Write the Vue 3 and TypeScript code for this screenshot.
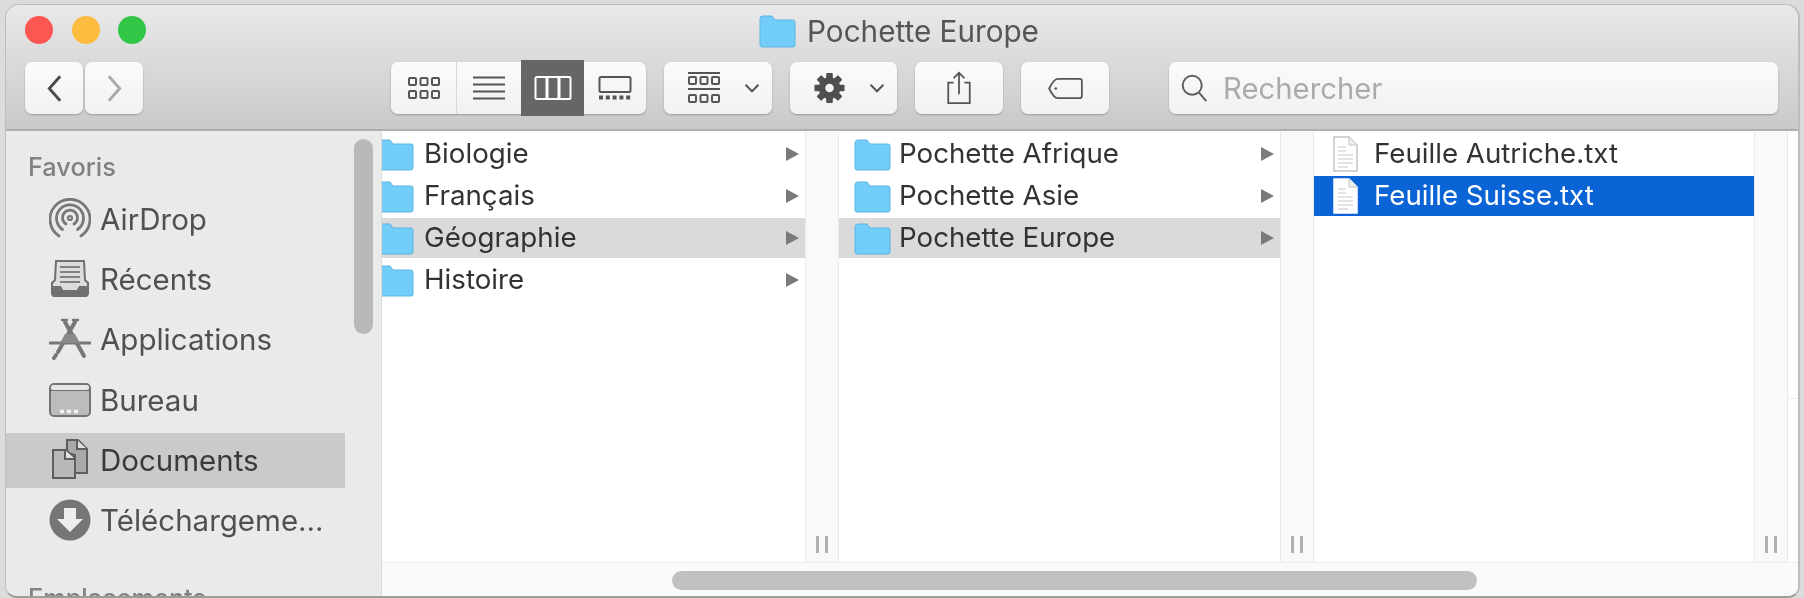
<script setup lang="ts">
interface Row {
  name: string
  icon: 'folder' | 'file'
  state?: 'open' | 'selected'
  arrow?: boolean
}

interface Column {
  width: number
  resizer: number
  rows: Row[]
}

const places = [
  { name: 'AirDrop', icon: 'airdrop' },
  { name: 'Récents', icon: 'recents' },
  { name: 'Applications', icon: 'apps' },
  { name: 'Bureau', icon: 'desktop' },
  { name: 'Documents', icon: 'docs', active: true },
  { name: 'Téléchargeme...', icon: 'download' },
]

const columns: Column[] = [
  {
    width: 423,
    resizer: 34,
    rows: [
      { name: 'Biologie', icon: 'folder', arrow: true },
      { name: 'Français', icon: 'folder', arrow: true },
      { name: 'Géographie', icon: 'folder', arrow: true, state: 'open' },
      { name: 'Histoire', icon: 'folder', arrow: true },
    ],
  },
  {
    width: 441,
    resizer: 34,
    rows: [
      { name: 'Pochette Afrique', icon: 'folder', arrow: true },
      { name: 'Pochette Asie', icon: 'folder', arrow: true },
      { name: 'Pochette Europe', icon: 'folder', arrow: true, state: 'open' },
    ],
  },
  {
    width: 440,
    resizer: 34,
    rows: [
      { name: 'Feuille Autriche.txt', icon: 'file' },
      { name: 'Feuille Suisse.txt', icon: 'file', state: 'selected' },
    ],
  },
]
</script>

<template>
  <div class="window">
    <header class="titlebar">
      <div class="title-row">
        <div class="lights">
          <span class="light red"></span>
          <span class="light yellow"></span>
          <span class="light green"></span>
        </div>
        <div class="title">
          <svg class="title-folder" viewBox="0 0 37 34">
            <path d="M1 5a3 3 0 0 1 3-3h9l3 4h18a2 2 0 0 1 2 2v23a2 2 0 0 1-2 2H3a2 2 0 0 1-2-2z" fill="#72cdf8" stroke="#5db4e2" />
          </svg>
          <span>Pochette Europe</span>
        </div>
      </div>

      <div class="toolbar">
        <div class="nav">
          <button class="btn nav-btn">
            <svg viewBox="0 0 18 30" width="17" height="29"><path d="M15 2 3.500 15 15 28" fill="none" stroke="#4a4a4a" stroke-width="3" /></svg>
          </button>
          <button class="btn nav-btn">
            <svg viewBox="0 0 18 30" width="17" height="29"><path d="M3 2l11.500 13L3 28" fill="none" stroke="#a9a9a9" stroke-width="3" /></svg>
          </button>
        </div>

        <div class="views">
          <button class="view view-grid">
            <svg viewBox="0 0 34 24" width="34" height="24" fill="none" stroke="#555" stroke-width="2">
              <rect x="2" y="2" width="7" height="7" rx="1" /><rect x="13.500" y="2" width="7" height="7" rx="1" /><rect x="25" y="2" width="7" height="7" rx="1" />
              <rect x="2" y="15" width="7" height="7" rx="1" /><rect x="13.500" y="15" width="7" height="7" rx="1" /><rect x="25" y="15" width="7" height="7" rx="1" />
            </svg>
          </button>
          <button class="view view-list">
            <svg viewBox="0 0 34 24" width="34" height="24" fill="none" stroke="#555" stroke-width="2">
              <path d="M1 1.500h32M1 8.500h32M1 15.500h32M1 22.500h32" />
            </svg>
          </button>
          <button class="view view-on">
            <svg viewBox="0 0 38 24" width="38" height="24" fill="none" stroke="#fff" stroke-width="2">
              <rect x="1.500" y="1" width="35" height="22" rx="1.500" /><path d="M13 1v22M25 1v22" stroke-width="3" />
            </svg>
          </button>
          <button class="view view-gallery">
            <svg viewBox="0 0 34 24" width="34" height="24" fill="none" stroke="#555" stroke-width="2">
              <rect x="1.500" y="1" width="31" height="15" rx="1.500" />
              <path d="M1 21.500h32" stroke-width="4" stroke-dasharray="4 2.800" />
            </svg>
          </button>
        </div>

        <button class="btn group-btn">
          <svg viewBox="0 0 34 32" width="34" height="32" fill="none" stroke="#555" stroke-width="2">
            <path d="M1 1h32M1 17h32" />
            <rect x="2" y="5" width="7" height="7" rx="1" /><rect x="13.500" y="5" width="7" height="7" rx="1" /><rect x="25" y="5" width="7" height="7" rx="1" />
            <rect x="2" y="23" width="7" height="7" rx="1" /><rect x="13.500" y="23" width="7" height="7" rx="1" /><rect x="25" y="23" width="7" height="7" rx="1" />
          </svg>
          <svg class="chev" viewBox="0 0 18 12" width="18" height="11"><path d="M2 2l7 7 7-7" fill="none" stroke="#555" stroke-width="2.200" /></svg>
        </button>

        <button class="btn action-btn">
          <svg viewBox="0 0 34 34" width="33" height="32">
            <g fill="#4f4f4f">
              <rect x="13.500" y="1" width="7" height="32" rx="1" />
              <rect x="13.500" y="1" width="7" height="32" rx="1" transform="rotate(45 17 17)" />
              <rect x="13.500" y="1" width="7" height="32" rx="1" transform="rotate(90 17 17)" />
              <rect x="13.500" y="1" width="7" height="32" rx="1" transform="rotate(135 17 17)" />
            </g>
            <circle cx="17" cy="17" r="9" fill="none" stroke="#4f4f4f" stroke-width="5" />
            <circle cx="17" cy="17" r="4.500" fill="#f3f3f3" />
          </svg>
          <svg class="chev" viewBox="0 0 18 12" width="18" height="11"><path d="M2 2l7 7 7-7" fill="none" stroke="#555" stroke-width="2.200" /></svg>
        </button>

        <button class="btn share-btn">
          <svg viewBox="0 0 28 38" width="26" height="34" fill="none" stroke="#555" stroke-width="2">
            <path d="M8 13H2v23h24V13h-6M14 26V2M8 8l6-6 6 6" />
          </svg>
        </button>

        <button class="btn tag-btn">
          <svg viewBox="0 0 40 26" width="39" height="23" fill="none" stroke="#555" stroke-width="2">
            <path d="M11 2h25a2.500 2.500 0 0 1 2.500 2.500v17A2.500 2.500 0 0 1 36 24H11C7 24 4 18 1.500 13 4 8 7 2 11 2z" stroke-linejoin="round" />
            <circle cx="9" cy="13" r="1.500" fill="#555" stroke="none" />
          </svg>
        </button>

        <div class="search">
          <svg viewBox="0 0 30 32" width="29" height="29" fill="none" stroke="#606060" stroke-width="2.200">
            <circle cx="12.500" cy="12.500" r="10.500" /><path d="M20 20.500l8 9.500" />
          </svg>
          <span>Rechercher</span>
        </div>
      </div>
    </header>

    <div class="body">
      <aside class="sidebar">
        <h2 class="section first">Favoris</h2>
        <ul class="places">
          <li v-for="p in places" :key="p.name" class="place" :class="{ active: p.active }">
            <svg class="place-icon" viewBox="0 0 42 42">
              <g v-if="p.icon === 'airdrop'" fill="none" stroke="#787878" stroke-width="2.800" stroke-linecap="round">
                <path d="M10 38A20 20 0 1 1 32 38" />
                <path d="M13.500 31.500A13.500 13.500 0 1 1 28.500 31.500" />
                <path d="M17 26A7.500 7.500 0 1 1 25 26" />
                <circle cx="21" cy="20" r="2" stroke-width="2.200" />
              </g>
              <g v-else-if="p.icon === 'recents'">
                <path d="M7 3h28l1 19 3 3v10a3 3 0 0 1-3 3H6a3 3 0 0 1-3-3V25l3-3z" fill="#dcdcdc" stroke="#707070" stroke-width="2" />
                <path d="M11 9h20M11 14h20M11 19h20M11 24h20" stroke="#808080" stroke-width="2" />
                <path d="M3 28h9l2 4h14l2-4h9v8a3 3 0 0 1-3 3H6a3 3 0 0 1-3-3z" fill="#707070" />
              </g>
              <g v-else-if="p.icon === 'apps'" fill="none" stroke="#777" stroke-width="4" stroke-linecap="round">
                <path d="M1 25h40" stroke-width="3" />
                <path d="M16 4l19 34M26 4L9 34" />
                <path d="M13 2h5M24 2h5" stroke-width="2.500" />
                <path d="M16 16l-5 9h20l-5-9z" fill="#8a8a8a" stroke="none" />
                <path d="M5 40l2-3" stroke-width="4" />
              </g>
              <g v-else-if="p.icon === 'desktop'">
                <rect x="1" y="5" width="40" height="32" rx="4" fill="#bcbcbc" stroke="#747474" stroke-width="2" />
                <path d="M1 11h40" stroke="#747474" stroke-width="2" />
                <rect x="2" y="6" width="38" height="5" rx="2.500" fill="#e6e6e6" />
                <path d="M11 32.500h20" stroke="#f4f4f4" stroke-width="3.500" stroke-dasharray="4 3" />
              </g>
              <g v-else-if="p.icon === 'docs'" stroke="#5e5e5e" stroke-width="2">
                <path d="M18 1h11l9 9v24H26V16l-8-2z" fill="#a9a9a9" />
                <path d="M28 1v9h10" fill="#dedede" />
                <path d="M4 11h13l9 8v20H4z" fill="#b8b8b8" />
                <path d="M16 11v9h10" fill="#e2e2e2" />
              </g>
              <g v-else>
                <circle cx="21" cy="21" r="20.500" fill="#767676" />
                <path d="M15 9h12v11h7L21 33 8 20h7z" fill="#eee" />
              </g>
            </svg>
            <span>{{ p.name }}</span>
          </li>
        </ul>
        <h2 class="section">Emplacements</h2>
        <div class="sidebar-thumb"></div>
      </aside>

      <main class="browser">
        <div class="columns">
          <template v-for="(col, i) in columns" :key="i">
            <section class="col" :class="{ 'col-scrolled': i === 0 }" :style="{ width: col.width + 'px' }">
              <div v-for="row in col.rows" :key="row.name" class="row" :class="row.state">
                <svg v-if="row.icon === 'folder'" class="folder" viewBox="0 0 37 33">
                  <path d="M1 5a3 3 0 0 1 3-3h9l3 4h18a2 2 0 0 1 2 2v22a2 2 0 0 1-2 2H3a2 2 0 0 1-2-2z" fill="#72cdf8" stroke="#5db4e2" />
                </svg>
                <svg v-else class="file" viewBox="0 0 27 36">
                  <path
                    d="M2 1h15l8 8v26H2z"
                    fill="#fff"
                    :stroke="row.state === 'selected' ? '#fff' : '#c4c4c4'"
                    stroke-width="1.500"
                  />
                  <path d="M17 1v8h8" fill="#ececec" stroke="#c4c4c4" />
                  <path d="M6 11h8M6 15h8M6 19h15M6 23h15M6 27h15M6 31h10" stroke="#dadada" stroke-width="1.500" />
                </svg>
                <span class="label">{{ row.name }}</span>
                <svg v-if="row.arrow" class="arrow" viewBox="0 0 13 14"><path d="M0 0l13 7-13 7z" fill="#7a7a7a" /></svg>
              </div>
            </section>
            <div class="resizer" :style="{ width: col.resizer + 'px' }"><i></i><i></i></div>
          </template>
          <div class="col-rest"></div>
        </div>
        <div class="hscroll"><div class="hthumb"></div></div>
      </main>
    </div>
  </div>
</template>

<style>
html,
body {
  margin: 0;
  background: #dcdcdc;
}
</style>

<style scoped>
.window {
  box-sizing: border-box;
  width: 1795px;
  height: 594px;
  margin: 4px 0 0 5px;
  border: solid #bdbdbd;
  border-width: 1px 2px 2px 1px;
  border-bottom-color: #9c9c9c;
  border-radius: 14px 14px 12px 12px;
  overflow: hidden;
  display: flex;
  flex-direction: column;
  font-family: Inter, "Liberation Sans", sans-serif;
  filter: blur(0.7px);
}

.titlebar {
  height: 126px;
  flex: none;
  border-bottom: 2px solid #aeaeae;
  background: linear-gradient(#e9e9e9, #c9c9c9);
  box-sizing: border-box;
}

.title-row {
  height: 57px;
  position: relative;
  display: flex;
  align-items: center;
  justify-content: center;
}

.lights {
  position: absolute;
  left: 19px;
  top: 11px;
  display: flex;
  gap: 18.500px;
}

.light {
  width: 28px;
  height: 28px;
  border-radius: 50%;
}

.red { background: #fc5753; }
.yellow { background: #fdbc40; }
.green { background: #33c748; }

.title {
  display: flex;
  align-items: center;
  gap: 11px;
  font-size: 29.700px;
  color: #555;
  margin: -5px 0 0 -6px;
}

.title-folder {
  width: 37px;
  height: 34px;
}

.toolbar {
  display: flex;
  align-items: stretch;
  height: 52px;
  padding-left: 19px;
}

.btn {
  border: none;
  padding: 0;
  background: linear-gradient(#fbfbfb, #f1f1f1);
  border-radius: 7px;
  box-shadow: 0 1px 2px rgba(0, 0, 0, 0.25);
  display: flex;
  align-items: center;
  justify-content: center;
}

.nav {
  display: flex;
  gap: 2px;
}

.nav-btn {
  width: 58px;
}

.views {
  display: flex;
  margin-left: 248px;
  border-radius: 7px;
  background: linear-gradient(#fbfbfb, #f1f1f1);
  box-shadow: 0 1px 2px rgba(0, 0, 0, 0.25);
}

.view {
  border: none;
  padding: 0;
  background: none;
  display: flex;
  align-items: center;
  justify-content: center;
}

.view-grid {
  width: 66px;
  border-right: 1px solid #d8d8d8;
}

.view-list {
  width: 64px;
}

.view-on {
  width: 63px;
  background: #666;
  margin: -2px 0;
}

.view-gallery {
  width: 62px;
}

.group-btn,
.action-btn {
  width: 107.500px;
  gap: 22px;
  margin-left: 18px;
  padding-left: 23px;
  box-sizing: border-box;
  justify-content: flex-start;
}

.share-btn,
.tag-btn {
  width: 88px;
  margin-left: 18px;
}

.search {
  margin-left: 60px;
  width: 609px;
  box-sizing: border-box;
  background: linear-gradient(#fbfbfb, #f1f1f1);
  border-radius: 7px;
  box-shadow: 0 1px 2px rgba(0, 0, 0, 0.25);
  display: flex;
  align-items: center;
  padding-left: 11px;
  gap: 14px;
  font-size: 29.300px;
  color: #ababab;
}

.body {
  flex: 1;
  display: flex;
  min-height: 0;
}

.sidebar {
  width: 376px;
  flex: none;
  background: #e9eaea;
  border-right: 1px solid #dcdcdc;
  box-sizing: border-box;
  position: relative;
  overflow: hidden;
  padding-top: 24px;
}

.section {
  margin: 0 0 0 22px;
  font-size: 25.300px;
  line-height: 24px;
  font-weight: 500;
  color: #818181;
}

.section:not(.first) {
  margin-top: 38px;
}

.places {
  list-style: none;
  margin: 12px 0 0;
  padding: 0;
}

.place {
  height: 55px;
  margin-bottom: 5.400px;
  width: 339px;
  display: flex;
  align-items: center;
  gap: 9px;
  padding-left: 43px;
  box-sizing: border-box;
  font-size: 29.500px;
  color: #505050;
}

.place.active {
  background: #c9caca;
  color: #3a3a3a;
}

.place-icon {
  width: 42px;
  height: 42px;
  flex: none;
}

.sidebar-thumb {
  position: absolute;
  left: 348px;
  top: 8px;
  width: 19px;
  height: 195px;
  border-radius: 10px;
  background: #b8baba;
}

.browser {
  flex: 1;
  min-width: 0;
  display: flex;
  flex-direction: column;
  background: #fff;
}

.columns {
  flex: 1;
  min-height: 0;
  display: flex;
}

.col {
  flex: none;
  padding-top: 3px;
  overflow: hidden;
}

.row {
  height: 40px;
  margin-bottom: 2px;
  display: flex;
  align-items: center;
  padding-left: 15px;
  font-size: 27.700px;
  color: #333;
}

.col-scrolled .row {
  padding-left: 0;
}

.col-scrolled .folder {
  margin-left: -5px;
}

.col-scrolled .label {
  margin-left: 10px;
}

.row.open {
  background: #dadada;
}

.row.selected {
  background: #0a64d6;
  color: #fff;
}

.folder {
  width: 37px;
  height: 33px;
  flex: none;
}

.file {
  width: 27px;
  height: 36px;
  flex: none;
  margin-left: 3px;
}

.label {
  margin-left: 8px;
  flex: 1;
  position: relative;
  top: -1px;
}

.file + .label {
  margin-left: 15px;
}

.arrow {
  width: 13px;
  height: 14px;
  flex: none;
  margin-right: 6px;
}

.resizer {
  flex: none;
  box-sizing: border-box;
  background: #f9f9f9;
  border-left: 1px solid #eaeaea;
  border-right: 1px solid #eaeaea;
  display: flex;
  justify-content: center;
  align-items: flex-end;
  gap: 6px;
  padding-bottom: 9px;
}

.resizer i {
  width: 3px;
  height: 17px;
  background: #b0b0b0;
}

.col-rest {
  flex: 1;
  height: 267px;
  border-bottom: 1px solid #ececec;
}

.hscroll {
  height: 34px;
  flex: none;
  position: relative;
  background: #fafafa;
  border-top: 1px solid #ececec;
  box-sizing: border-box;
}

.hthumb {
  position: absolute;
  left: 290px;
  top: 8px;
  width: 805px;
  height: 19px;
  border-radius: 10px;
  background: #c1c1c1;
}
</style>
